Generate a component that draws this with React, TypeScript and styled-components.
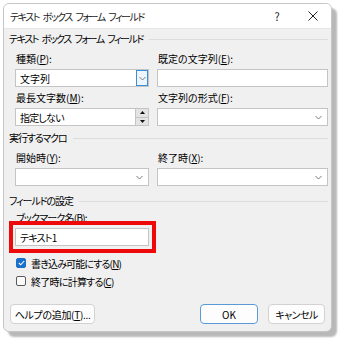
import React from "react";
import styled, { createGlobalStyle } from "styled-components";

const GlobalStyle = createGlobalStyle`
  body {
    margin: 0;
    background: #ffffff;
    font-family: "Noto Sans CJK JP", "Noto Sans", sans-serif;
  }
`;

const Stage = styled.div`
  width: 346px;
  height: 342px;
  padding: 3px 0 0 3px;
  box-sizing: border-box;
`;

const Dialog = styled.div`
  width: 329px;
  height: 329px;
  box-sizing: border-box;
  border: 1px solid #c6c6c6;
  border-radius: 6px;
  overflow: hidden;
  background: #f0f0f0;
  box-shadow: 5px 5px 2px rgba(0, 0, 0, 0.28);
  display: flex;
  flex-direction: column;
  font-size: 10px;
  font-feature-settings: "palt";
  color: #000;
`;

// kana text in the original UI font is much narrower than Noto's
const Tight = styled.span<{ $ls: number; $ws?: number }>`
  letter-spacing: ${(p) => p.$ls}px;
  word-spacing: ${(p) => p.$ws ?? 0}px;
`;

const TitleBar = styled.div`
  height: 24px;
  flex: none;
  background: #ffffff;
  display: flex;
  align-items: center;
  padding-left: 6px;
  border-bottom: 1px solid #e6e6e6;
`;

const TitleText = styled.div`
  flex: 1;
  font-size: 10px;
  color: #1a1a1a;
`;

const CaptionButton = styled.div`
  width: 36px;
  height: 24px;
  display: flex;
  align-items: center;
  justify-content: center;
  font-size: 11px;
  color: #222;
`;

const Body = styled.div`
  flex: 1;
  padding: 3px 3px 0 5px;
  display: flex;
  flex-direction: column;
`;

const GroupHeader = styled.div<{ $top: number }>`
  display: flex;
  align-items: center;
  gap: 6px;
  line-height: 14px;
  margin-top: ${(p) => p.$top}px;
  &::after {
    content: "";
    flex: 1;
    height: 1px;
    background: #dcdcdc;
  }
`;

const Grid = styled.div<{ $top: number }>`
  display: grid;
  grid-template-columns: 134px 1fr;
  column-gap: 8px;
  row-gap: 4px;
  margin: ${(p) => p.$top}px 0 0 6px;
`;

const Field = styled.div`
  display: flex;
  flex-direction: column;
  position: relative;
`;

const Label = styled.div`
  line-height: 14px;
  padding-left: 1px;
  margin-bottom: 3px;
  white-space: nowrap;
  & u {
    text-decoration-thickness: 1px;
    text-underline-offset: 1px;
  }
`;

const Box = styled.div<{ $h?: number }>`
  height: ${(p) => p.$h ?? 18}px;
  box-sizing: border-box;
  background: #ffffff;
  border: 1px solid #c4c4c4;
  display: flex;
  align-items: stretch;
`;

const BoxText = styled.div`
  flex: 1;
  padding-left: 4px;
  display: flex;
  align-items: center;
  font-size: 10px;
`;

const DropArrow = styled.div<{ $active?: boolean }>`
  width: 12px;
  margin-right: ${(p) => (p.$active ? 0 : 3)}px;
  display: flex;
  align-items: center;
  justify-content: center;
  box-sizing: border-box;
  border: ${(p) => (p.$active ? "1px solid #3c8fd6" : "none")};
  background: ${(p) => (p.$active ? "#eef5fc" : "transparent")};
`;

const Spin = styled.div`
  width: 12px;
  display: flex;
  flex-direction: column;
  border-left: 1px solid #c4c4c4;
`;

const SpinHalf = styled.div`
  flex: 1;
  background: #e4e4e4;
  display: flex;
  align-items: center;
  justify-content: center;
  & + & {
    border-top: 1px solid #c4c4c4;
  }
`;

const Highlight = styled(Field)`
  &::after {
    content: "";
    position: absolute;
    left: -6px;
    right: -7px;
    top: 10px;
    bottom: -7px;
    border: 4px solid #ee0a0a;
    pointer-events: none;
  }
`;

const CheckRow = styled.div<{ $top: number }>`
  display: flex;
  align-items: center;
  gap: 5px;
  height: 16px;
  margin: ${(p) => p.$top}px 0 0 7px;
`;

const CheckBox = styled.div<{ $checked?: boolean }>`
  width: 10px;
  height: 10px;
  box-sizing: border-box;
  border-radius: 2px;
  border: 1px solid ${(p) => (p.$checked ? "#1a6fc9" : "#5a5a5a")};
  background: ${(p) => (p.$checked ? "#1a6fc9" : "#fafafa")};
  display: flex;
  align-items: center;
  justify-content: center;
`;

const ButtonRow = styled.div`
  display: flex;
  align-items: center;
  gap: 10px;
  margin: 15px 3px 0 1px;
`;

const Button = styled.div<{ $w: number; $primary?: boolean }>`
  width: ${(p) => p.$w}px;
  height: 20px;
  box-sizing: border-box;
  border-radius: 4px;
  background: #fdfdfd;
  border: 1px solid ${(p) => (p.$primary ? "#5a9ad6" : "#d2d2d2")};
  display: flex;
  align-items: center;
  justify-content: center;
  font-size: 10px;
`;

const Spacer = styled.div`
  flex: 1;
`;

const Chevron = () => (
  <svg width="7" height="5" viewBox="0 0 7 5">
    <path d="M0.5 1 L3.5 4 L6.5 1" fill="none" stroke="#7a7a7a" strokeWidth="1" />
  </svg>
);

const Tri = ({ up }: { up?: boolean }) => (
  <svg width="5" height="3" viewBox="0 0 5 3">
    <path d={up ? "M0 3 L2.5 0 L5 3 Z" : "M0 0 L2.5 3 L5 0 Z"} fill="#111" />
  </svg>
);

const Select = ({ value, active }: { value?: string; active?: boolean }) => (
  <Box>
    <BoxText>{value}</BoxText>
    <DropArrow $active={active}>
      <Chevron />
    </DropArrow>
  </Box>
);

export default function App() {
  return (
    <Stage>
      <GlobalStyle />
      <Dialog>
        <TitleBar>
          <TitleText>
            <Tight $ls={-1.5} $ws={3}>
              テキスト ボックス フォーム フィールド
            </Tight>
          </TitleText>
          <CaptionButton>?</CaptionButton>
          <CaptionButton>
            <svg width="10" height="10" viewBox="0 0 10 10">
              <path d="M0.5 0.5 L9.5 9.5 M9.5 0.5 L0.5 9.5" stroke="#222" strokeWidth="1" />
            </svg>
          </CaptionButton>
        </TitleBar>
        <Body>
          <GroupHeader $top={0}>
            <Tight $ls={-1.5} $ws={3}>
              テキスト ボックス フォーム フィールド
            </Tight>
          </GroupHeader>
          <Grid $top={6}>
            <Field>
              <Label>
                種類(<u>P</u>):
              </Label>
              <Select value="文字列" active />
            </Field>
            <Field>
              <Label>
                既定の文字列(<u>E</u>):
              </Label>
              <Box />
            </Field>
            <Field>
              <Label>
                最長文字数(<u>M</u>):
              </Label>
              <Box>
                <BoxText>
                  <Tight $ls={-0.8}>指定しない</Tight>
                </BoxText>
                <Spin>
                  <SpinHalf>
                    <Tri up />
                  </SpinHalf>
                  <SpinHalf>
                    <Tri />
                  </SpinHalf>
                </Spin>
              </Box>
            </Field>
            <Field>
              <Label>
                文字列の形式(<u>F</u>):
              </Label>
              <Select />
            </Field>
          </Grid>
          <GroupHeader $top={5}>
            <Tight $ls={-1.1}>実行するマクロ</Tight>
          </GroupHeader>
          <Grid $top={6}>
            <Field>
              <Label>
                開始時(<u>Y</u>):
              </Label>
              <Select />
            </Field>
            <Field>
              <Label>
                終了時(<u>X</u>):
              </Label>
              <Select />
            </Field>
          </Grid>
          <GroupHeader $top={8}>
            <Tight $ls={-1.1}>フィールドの設定</Tight>
          </GroupHeader>
          <Grid $top={3}>
            <Highlight>
              <Label>
                <Tight $ls={-0.8}>
                  ブックマーク名(<u>B</u>):
                </Tight>
              </Label>
              <Box>
                <BoxText>
                  <Tight $ls={-0.8}>テキスト1</Tight>
                </BoxText>
              </Box>
            </Highlight>
          </Grid>
          <CheckRow $top={9}>
            <CheckBox $checked>
              <svg width="7" height="6" viewBox="0 0 7 6">
                <path d="M0.8 3 L2.7 4.8 L6.2 1" fill="none" stroke="#fff" strokeWidth="1.1" />
              </svg>
            </CheckBox>
            <Tight $ls={-0.85}>
              書き込み可能にする(<u>N</u>)
            </Tight>
          </CheckRow>
          <CheckRow $top={2}>
            <CheckBox />
            <Tight $ls={-0.75}>
              終了時に計算する(<u>C</u>)
            </Tight>
          </CheckRow>
          <ButtonRow>
            <Button $w={85}>
              <Tight $ls={-0.3}>
                ヘルプの追加(<u>T</u>)...
              </Tight>
            </Button>
            <Spacer />
            <Button $w={58} $primary>
              OK
            </Button>
            <Button $w={57}>
              <Tight $ls={-0.6}>キャンセル</Tight>
            </Button>
          </ButtonRow>
        </Body>
      </Dialog>
    </Stage>
  );
}
